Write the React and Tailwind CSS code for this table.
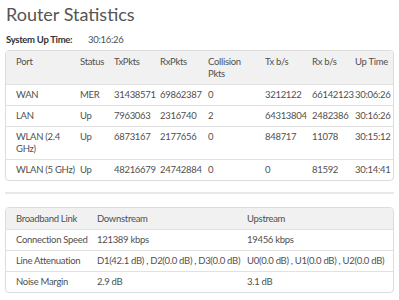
import React from 'react';

const portCols = 'grid grid-cols-[64px_34px_46px_48px_57px_47px_43px_1fr]';
const linkCols = 'grid grid-cols-[81px_150px_1fr]';

const portHead = ['Port', 'Status', 'TxPkts', 'RxPkts', <>Collision<br />Pkts</>, 'Tx b/s', 'Rx b/s', 'Up Time'];
const portRows = [
  ['WAN', 'MER', '31438571', '69862387', '0', '3212122', '66142123', '30:06:26'],
  ['LAN', 'Up', '7963063', '2316740', '2', '64313804', '2482386', '30:16:26'],
  ['WLAN (2.4 GHz)', 'Up', '6873167', '2177656', '0', '848717', '11078', '30:15:12'],
  ['WLAN (5 GHz)', 'Up', '48216679', '24742884', '0', '0', '81592', '30:14:41'],
];

const linkHead = ['Broadband Link', 'Downstream', 'Upstream'];
const linkRows = [
  ['Connection Speed', '121389 kbps', '19456 kbps'],
  ['Line Attenuation', 'D1(42.1 dB) , D2(0.0 dB) , D3(0.0 dB)', 'U0(0.0 dB) , U1(0.0 dB) , U2(0.0 dB)'],
  ['Noise Margin', '2.9 dB', '3.1 dB'],
];

// cells wrap only where the reference wraps them
const StatTable = ({ cols, head, rows, wrapFirst }) => (
  <div className="border border-[#dcdcdc] rounded-[4px] overflow-hidden">
    <div className={`${cols} bg-[#f1f1f1] pl-[10px] pt-[5px] pb-[4px]`}>
      {head.map((h, j) => (
        <div key={j} className="pr-[4px] whitespace-nowrap">{h}</div>
      ))}
    </div>
    {rows.map((r, i) => (
      <div key={i} className={`${cols} pl-[10px] border-t border-[#e2e2e2] py-[4px]`}>
        {r.map((c, j) => (
          <div key={j} className={`pr-[4px] ${j === 0 && wrapFirst ? '' : 'whitespace-nowrap'}`}>{c}</div>
        ))}
      </div>
    ))}
  </div>
);

export default function App() {
  return (
    <div className="w-[399px] h-[300px] bg-white px-[5px] pt-[4px] text-[#505050] text-[9.5px] leading-[12px] tracking-[-0.3px] font-['Lato',sans-serif] overflow-hidden">
      <h1 className="text-[18px] leading-[20px] tracking-normal text-[#555] ml-[1px]">Router Statistics</h1>
      <div className="flex mt-[10px] ml-[1px] h-[12px]">
        <span className="w-[82px] font-bold text-[#333]">System Up Time:</span>
        <span>30:16:26</span>
      </div>
      <div className="mt-[4px]">
        <StatTable cols={portCols} head={portHead} rows={portRows} wrapFirst />
      </div>
      <div className="mt-[11px] h-[2px] bg-[#e8e8e8]" />
      <div className="mt-[13px]">
        <StatTable cols={linkCols} head={linkHead} rows={linkRows} />
      </div>
    </div>
  );
}
